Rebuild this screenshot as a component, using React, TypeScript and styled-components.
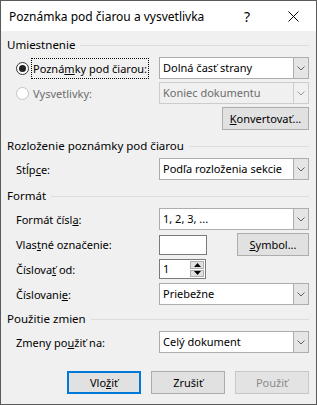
import { createGlobalStyle, styled } from "styled-components"

const GlobalStyle = createGlobalStyle`
	html, body {
		margin: 0;
		padding: 0;
		background: #ffffff;
	}
	body {
		font-family: "Noto Sans", "Segoe UI", sans-serif;
		font-size: 11px;
		color: #000;
	}
	* {
		box-sizing: border-box;
	}
`

const Window = styled.div`
	width: 317px;
	height: 405px;
	border: 1px solid #5a5a5a;
	background: #f0f0f0;
	display: flex;
	flex-direction: column;
`

const TitleBar = styled.div`
	height: 30px;
	background: #ffffff;
	display: flex;
	align-items: center;
	padding-left: 8px;
	font-size: 12px;
`

const Title = styled.div`
	flex: 1;
`

const TitleButton = styled.div`
	width: 46px;
	height: 30px;
	display: flex;
	align-items: center;
	justify-content: center;
	font-size: 14px;
`

const Body = styled.div`
	padding: 6px 7px 0 6px;
	display: flex;
	flex-direction: column;
`

const Section = styled.div<{ $top: number }>`
	margin-top: ${(p) => p.$top}px;
	display: flex;
	flex-direction: column;
	gap: 3px;
`

const Heading = styled.div`
	height: 16px;
	line-height: 16px;
	font-size: 11.5px;
	display: flex;
	align-items: center;
	gap: 5px;
	margin-bottom: 1px;
	white-space: nowrap;

	&::after {
		content: "";
		flex: 1;
		height: 1px;
		background: #dcdcdc;
	}
`

const Row = styled.div`
	height: 22px;
	display: grid;
	grid-template-columns: 1fr 150px;
	align-items: center;
	padding-left: 9px;
`

const EndRow = styled.div`
	height: 23px;
	display: flex;
	justify-content: flex-end;
`

const Label = styled.span<{ $disabled?: boolean }>`
	color: ${(p) => (p.$disabled ? "#6d6d6d" : "#000")};
	white-space: nowrap;
`

const RadioLabel = styled.label`
	display: flex;
	align-items: center;
	gap: 2px;
	white-space: nowrap;
`

const Radio = styled.span<{ $checked?: boolean; $disabled?: boolean }>`
	flex: none;
	width: 13px;
	height: 13px;
	border-radius: 50%;
	border: 1px solid ${(p) => (p.$disabled ? "#c4c4c4" : "#333")};
	background: #fff;
	display: flex;
	align-items: center;
	justify-content: center;

	&::after {
		content: "";
		display: ${(p) => (p.$checked ? "block" : "none")};
		width: 7px;
		height: 7px;
		border-radius: 50%;
		background: #222;
	}
`

const Focus = styled.span`
	border: 1px dotted #000;
	padding: 1px 1px;
	line-height: 17px;
`

const SelectBox = styled.div<{ $disabled?: boolean }>`
	height: 22px;
	display: flex;
	border: 1px solid ${(p) => (p.$disabled ? "#cccccc" : "#adadad")};
	background: ${(p) => (p.$disabled ? "#f0f0f0" : "#ffffff")};
	color: ${(p) => (p.$disabled ? "#6d6d6d" : "#000")};
`

const SelectText = styled.div`
	flex: 1;
	padding-left: 3px;
	line-height: 20px;
	white-space: nowrap;
	overflow: hidden;
`

const Arrow = styled.div<{ $disabled?: boolean }>`
	flex: none;
	width: 15px;
	border-left: 1px solid ${(p) => (p.$disabled ? "#cccccc" : "#adadad")};
	background: ${(p) => (p.$disabled ? "#f0f0f0" : "#e5e5e5")};
	display: flex;
	align-items: center;
	justify-content: center;
`

const Button = styled.div<{ $width: number; $default?: boolean; $disabled?: boolean }>`
	width: ${(p) => p.$width}px;
	height: 23px;
	background: ${(p) => (p.$disabled ? "#e3e3e3" : "#e1e1e1")};
	border: ${(p) =>
		p.$default ? "2px solid #0078d7" : `1px solid ${p.$disabled ? "#c8c8c8" : "#adadad"}`};
	color: ${(p) => (p.$disabled ? "#8a8a8a" : "#000")};
	display: flex;
	align-items: center;
	justify-content: center;
	white-space: nowrap;
`

const Field = styled.div`
	display: flex;
	align-items: center;
	justify-content: space-between;
`

const TextInput = styled.div`
	width: 48px;
	height: 20px;
	background: #fff;
	border: 1px solid #7a7a7a;
`

const Spinner = styled.div`
	width: 47px;
	height: 20px;
	display: flex;
	background: #fff;
	border: 1px solid #7a7a7a;
`

const SpinValue = styled.div`
	flex: 1;
	padding-left: 3px;
	line-height: 18px;
`

const SpinButtons = styled.div`
	width: 16px;
	display: flex;
	flex-direction: column;
	gap: 1px;
	padding: 1px;
`

const SpinButton = styled.div`
	flex: 1;
	background: #e1e1e1;
	border: 1px solid #adadad;
	display: flex;
	align-items: center;
	justify-content: center;
`

const Footer = styled.div`
	margin-top: 18px;
	display: flex;
	justify-content: flex-end;
	gap: 10px;
`

function Chevron({ disabled }: { disabled?: boolean }) {
	return (
		<svg width="8" height="5" viewBox="0 0 8 5">
			<path d="M0.5 0.5 L4 4 L7.5 0.5" fill="none" stroke={disabled ? "#9a9a9a" : "#606060"} strokeWidth="1" />
		</svg>
	)
}

function Select({ value, disabled }: { value: string; disabled?: boolean }) {
	return (
		<SelectBox $disabled={disabled}>
			<SelectText>{value}</SelectText>
			<Arrow $disabled={disabled}>
				<Chevron disabled={disabled} />
			</Arrow>
		</SelectBox>
	)
}

export default function App() {
	return (
		<>
			<GlobalStyle />
			<Window>
				<TitleBar>
					<Title>Poznámka pod čiarou a vysvetlivka</Title>
					<TitleButton>?</TitleButton>
					<TitleButton>
						<svg width="11" height="11" viewBox="0 0 11 11">
							<path d="M0.5 0.5 L10.5 10.5 M10.5 0.5 L0.5 10.5" stroke="#000" strokeWidth="1" />
						</svg>
					</TitleButton>
				</TitleBar>
				<Body>
					<Section $top={0}>
						<Heading>Umiestnenie</Heading>
						<Row>
							<RadioLabel>
								<Radio $checked />
								<Focus>
									Pozná<u>m</u>ky pod čiarou:
								</Focus>
							</RadioLabel>
							<Select value="Dolná časť strany" />
						</Row>
						<Row>
							<RadioLabel>
								<Radio $disabled />
								<Label $disabled style={{ paddingLeft: 2 }}>Vysvetlivky:</Label>
							</RadioLabel>
							<Select value="Koniec dokumentu" disabled />
						</Row>
						<EndRow>
							<Button $width={87}>
								<span>
									<u>K</u>onvertovať...
								</span>
							</Button>
						</EndRow>
					</Section>
					<Section $top={8}>
						<Heading>Rozloženie poznámky pod čiarou</Heading>
						<Row>
							<Label>
								Stĺp<u>c</u>e:
							</Label>
							<Select value="Podľa rozloženia sekcie" />
						</Row>
					</Section>
					<Section $top={8}>
						<Heading>Formát</Heading>
						<Row>
							<Label>
								Formát čísl<u>a</u>:
							</Label>
							<Select value="1, 2, 3, ..." />
						</Row>
						<Row>
							<Label>
								Vlas<u>t</u>né označenie:
							</Label>
							<Field>
								<TextInput />
								<Button $width={72}>
									<span>
										<u>S</u>ymbol...
									</span>
								</Button>
							</Field>
						</Row>
						<Row>
							<Label>
								Číslova<u>ť</u> od:
							</Label>
							<Field>
								<Spinner>
									<SpinValue>1</SpinValue>
									<SpinButtons>
										<SpinButton>
											<svg width="7" height="4" viewBox="0 0 7 4">
												<path d="M0 4 L3.5 0 L7 4 Z" fill="#000" />
											</svg>
										</SpinButton>
										<SpinButton>
											<svg width="7" height="4" viewBox="0 0 7 4">
												<path d="M0 0 L3.5 4 L7 0 Z" fill="#000" />
											</svg>
										</SpinButton>
									</SpinButtons>
								</Spinner>
							</Field>
						</Row>
						<Row>
							<Label>
								Číslovani<u>e</u>:
							</Label>
							<Select value="Priebežne" />
						</Row>
					</Section>
					<Section $top={6}>
						<Heading>Použitie zmien</Heading>
						<Row>
							<Label>
								Zmeny po<u>u</u>žiť na:
							</Label>
							<Select value="Celý dokument" />
						</Row>
					</Section>
					<Footer>
						<Button $width={74} $default>
							<span>
								Vlo<u>ž</u>iť
							</span>
						</Button>
						<Button $width={74}>Zrušiť</Button>
						<Button $width={74} $disabled>
							Použiť
						</Button>
					</Footer>
				</Body>
			</Window>
		</>
	)
}
